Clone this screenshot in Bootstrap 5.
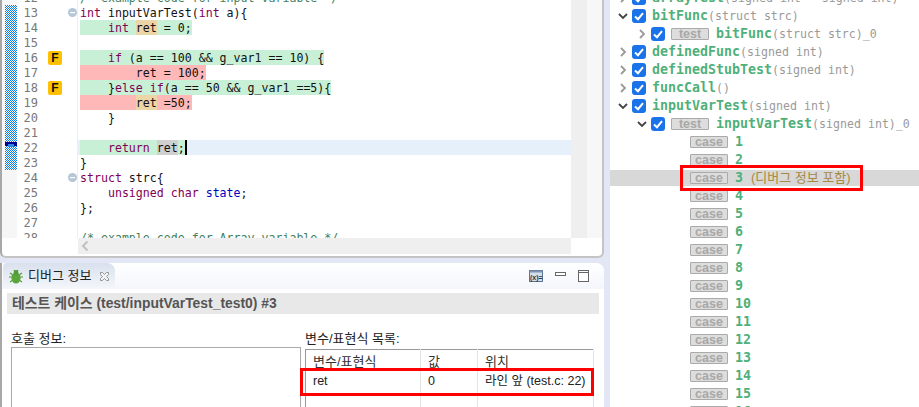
<!DOCTYPE html>
<html lang="ko">
<head>
<meta charset="utf-8">
<title>디버그 정보</title>
<link href="https://cdn.jsdelivr.net/npm/bootstrap@5.3.0/dist/css/bootstrap.min.css" rel="stylesheet">
<style>
html,body{margin:0;height:407px;overflow:hidden;background:#fff}
.shell{width:919px;height:407px;overflow:hidden;position:relative;font-family:"Liberation Sans","Noto Sans CJK KR",sans-serif;font-size:12px;color:#222}
.leftcol{width:610px;height:407px;flex:none;background:#e3e6f5}
.editorbox{height:258px;width:604px;background:#fff;border-left:2px solid #a8a8a8;border-bottom:2px solid #c4c4c4;border-right:2px solid #c4c4c4;border-bottom-left-radius:6px;border-bottom-right-radius:6px;overflow:hidden}
.mainrow{height:238px}
.rulercol{width:15px;flex:none;background:#f6f6f6;padding-left:3px;padding-top:5px;position:relative}
.rulerfill{display:block;width:12px;height:165px}
.rulermark{position:absolute;left:3px;top:142px;width:12px;height:4px;background:#000090}
.rulermark::after{content:"";position:absolute;left:3px;top:2px;width:6px;height:3px;background:#2a88e0}
.clip{flex:1;overflow:hidden;min-width:0;position:relative}
.codelist{margin-top:-10px;font-family:"DejaVu Sans Mono","Liberation Mono",monospace;font-size:11.6px;color:#111}
.ln{height:15px;line-height:17px;white-space:pre}
.num{width:21px;flex:none;text-align:right;color:#787878;font-size:12px}
.anno{width:28px;flex:none;padding-left:10px;padding-top:1px}
.fbadge{display:block;width:14px;height:14px;border-radius:2px;background:#ffc000;color:#111;font:bold 12px/14px "Liberation Sans",sans-serif;text-align:center}
.foldc{width:12px;flex:none;border-right:1px solid #eee;padding-left:2px;padding-top:3px;line-height:0}
.codec{flex:1;padding-left:2px}
.curline{background:#e6f0fb}
.g,.r,.o,.s{display:inline-block;height:15px;vertical-align:top}
.g{background:#c8f0d6}.r{background:#ffb8b8}.o{background:#ecd5a6}.s{background:#d0d0d0}
.kw{color:#7f0055;font-weight:500}
.fld{color:#0000c0}
.cmt{color:#3f7f5f}
.caret{display:inline-block;width:2px;height:15px;background:#000;vertical-align:top}
.vsb{width:16px;flex:none;background:#efefef}
.ovr{width:15px;flex:none;background:#f7f7f7}
.hsb{height:16px;margin-left:76px;margin-right:31px;background:#efefef;padding-left:3px}
.btmpanel{margin-top:5px;width:604px;height:144px;background:#fff;border-left:2px solid #a8a8a8;border-top-right-radius:8px;overflow:hidden}
.tabstrip{height:26px;background:linear-gradient(#fff,#f3f6fb);border-top-right-radius:8px}
.dtab{width:112px;margin-left:1px;height:26px;background:linear-gradient(#d9e1ee,#f4f7fb);border-top-right-radius:8px;border-top-left-radius:4px;padding-left:5px;gap:4px;font-size:13px;color:#222}
.viewbtns{margin-left:auto;padding-right:15px;gap:12px}
.ptitle{margin:4px 5px 0 5px;height:21px;line-height:21px;background:#e8e8e8;color:#555;font-weight:700;font-size:13.9px;padding-left:5px;white-space:nowrap}
.cols{padding:15px 0 0 9px;gap:4px}
.colhead{height:20px;line-height:20px;font-size:13px}
.colA{width:290px;flex:none}
.colB{width:289px;flex:none}
.listbox{height:70px;border:1px solid #aaa;border-bottom:0;margin-top:-2px}
.vartable{width:289px;table-layout:fixed;border-collapse:collapse;margin:0;border:1px solid #999;border-bottom:0;font-size:12.5px}
.vartable th{font-weight:400;height:22px;padding:0 0 0 7px;border:0;border-right:1px solid #e4e4e4;color:#333;background:#fff;font-size:13px}
.vartable td{height:25px;padding:0 0 0 7px;border:0;border-right:1px solid #e4e4e4;background:#fff;color:#222;white-space:nowrap}
.rightcol{flex:1;min-width:0;overflow:hidden}
.tree{margin-top:-11px;font-family:"DejaVu Sans Mono","Liberation Mono",monospace}
.trow{height:18px;line-height:18px;white-space:pre}
.trow.sel{background:#d8d8d8;box-shadow:inset 0 1px #fff,inset 0 -1px #fff}
.lv1{padding-left:7px}.lv2{padding-left:26px}.lv3{padding-left:80px}
.chev{width:12px;height:12px;flex:none;margin-right:3px}
.cbx{width:14px;height:14px;flex:none;margin-right:6px;border-radius:3px;background:#1a73e8}
.nm{font-weight:700;font-size:13.3px;color:#4fb07a}
.args{font-size:11.6px;color:#9a9a9a}
.tag{display:inline-block;width:38px;height:12px;border:1px solid #aaa;border-radius:1px;background:#ddd;color:#a8a8a8;font:700 12.5px/10px "Liberation Sans",sans-serif;text-align:center;margin-right:7px;flex:none}
.dbg{font-family:"Liberation Sans","Noto Sans CJK KR",sans-serif;font-size:13px;color:#a8893f}
.redbox{position:absolute;border:3px solid #f00;pointer-events:none}
.rb1{left:300px;top:368px;width:294px;height:28px}
.rb2{left:680px;top:165px;width:183px;height:26px}
</style>
</head>
<body>
<div class="shell d-flex">
  <div class="leftcol d-flex flex-column">
    <div class="editorbox d-flex flex-column">
      <div class="mainrow d-flex">
        <div class="rulercol"><svg class="rulerfill" viewBox="0 0 12 165" shape-rendering="crispEdges"><defs><pattern id="chk" width="2" height="2" patternUnits="userSpaceOnUse"><rect width="2" height="2" fill="#fff"/><rect width="1" height="1" fill="#0a7fe8"/><rect x="1" y="1" width="1" height="1" fill="#0a7fe8"/></pattern></defs><rect width="12" height="165" fill="url(#chk)"/></svg><div class="rulermark"></div></div>
        <div class="clip">
          <div class="codelist">
            <div class="ln d-flex"><div class="num">12</div><div class="anno"></div><div class="foldc"></div><div class="codec cmt">/* example code for input variable */</div></div>
            <div class="ln d-flex"><div class="num">13</div><div class="anno"></div><div class="foldc"><svg width="9" height="9" viewBox="0 0 9 9"><circle cx="4.5" cy="4.5" r="4.5" fill="#b4c6d8"/><rect x="2" y="4" width="5" height="1.2" fill="#fff"/></svg></div><div class="codec"><span class="kw">int</span> inputVarTest(<span class="kw">int</span> a){</div></div>
            <div class="ln d-flex"><div class="num">14</div><div class="anno"></div><div class="foldc"></div><div class="codec"><span class="g">    <span class="kw">int</span> </span><span class="o">ret</span><span class="g"> = 0;</span></div></div>
            <div class="ln d-flex"><div class="num">15</div><div class="anno"></div><div class="foldc"></div><div class="codec"></div></div>
            <div class="ln d-flex"><div class="num">16</div><div class="anno"><span class="fbadge">F</span></div><div class="foldc"></div><div class="codec"><span class="g">    <span class="kw">if</span> (a == 100 &amp;&amp; g_var1 == 10) {</span></div></div>
            <div class="ln d-flex"><div class="num">17</div><div class="anno"></div><div class="foldc"></div><div class="codec"><span class="r">        ret = 100;</span></div></div>
            <div class="ln d-flex"><div class="num">18</div><div class="anno"><span class="fbadge">F</span></div><div class="foldc"></div><div class="codec"><span class="g">    }<span class="kw">else if</span>(a == 50 &amp;&amp; g_var1 ==5){</span></div></div>
            <div class="ln d-flex"><div class="num">19</div><div class="anno"></div><div class="foldc"></div><div class="codec"><span class="r">        </span><span class="o">ret</span><span class="r"> =50;</span></div></div>
            <div class="ln d-flex"><div class="num">20</div><div class="anno"></div><div class="foldc"></div><div class="codec">    }</div></div>
            <div class="ln d-flex"><div class="num">21</div><div class="anno"></div><div class="foldc"></div><div class="codec"></div></div>
            <div class="ln d-flex"><div class="num">22</div><div class="anno"></div><div class="foldc"></div><div class="codec curline"><span class="g">    <span class="kw">return</span> </span><span class="s">ret</span><span class="g">;</span><span class="caret"></span></div></div>
            <div class="ln d-flex"><div class="num">23</div><div class="anno"></div><div class="foldc"></div><div class="codec">}</div></div>
            <div class="ln d-flex"><div class="num">24</div><div class="anno"></div><div class="foldc"><svg width="9" height="9" viewBox="0 0 9 9"><circle cx="4.5" cy="4.5" r="4.5" fill="#b4c6d8"/><rect x="2" y="4" width="5" height="1.2" fill="#fff"/></svg></div><div class="codec"><span class="kw">struct</span> strc{</div></div>
            <div class="ln d-flex"><div class="num">25</div><div class="anno"></div><div class="foldc"></div><div class="codec">    <span class="kw">unsigned char</span> <span class="fld">state</span>;</div></div>
            <div class="ln d-flex"><div class="num">26</div><div class="anno"></div><div class="foldc"></div><div class="codec">};</div></div>
            <div class="ln d-flex"><div class="num">27</div><div class="anno"></div><div class="foldc"></div><div class="codec"></div></div>
            <div class="ln d-flex"><div class="num">28</div><div class="anno"></div><div class="foldc"></div><div class="codec cmt">/* example code for Array variable */</div></div>
          </div>
        </div>
        <div class="vsb"></div>
        <div class="ovr"></div>
      </div>
      <div class="hsb d-flex align-items-center"><svg width="8" height="12" viewBox="0 0 8 12"><polyline points="6.5,1.5 2,6 6.5,10.5" fill="none" stroke="#c0c0c0" stroke-width="2"/></svg></div>
    </div>
    <div class="btmpanel">
      <div class="tabstrip d-flex">
        <div class="dtab d-flex align-items-center">
          <svg width="16" height="16" viewBox="0 0 16 16"><g stroke="#4f9a3a" stroke-width="1.2"><path d="M2 5l3 2M14 5l-3 2M1 9h3M15 9h-3M2 14l3-2M14 14l-3-2M6 2l1 2M10 2l-1 2"/></g><ellipse cx="8" cy="10" rx="4.6" ry="5.5" fill="#5aa53c"/><circle cx="8" cy="4.5" r="2.4" fill="#4f9a3a"/></svg>
          <span>디버그 정보</span>
          <svg class="ms-1" width="11" height="11" viewBox="0 0 11 11"><path d="M1.5 1.5h2l2 2 2-2h2v2l-2 2 2 2v2h-2l-2-2-2 2h-2v-2l2-2-2-2z" fill="#f4f4f4" stroke="#8a8a8a" stroke-width=".9"/></svg>
        </div>
        <div class="viewbtns d-flex align-items-center">
          <svg width="14" height="12" viewBox="0 0 14 12"><rect x=".5" y=".5" width="13" height="11" fill="#d4dfee" stroke="#5c7391"/><rect x=".5" y=".5" width="13" height="2" fill="#7d93ad"/><text x="1" y="9.5" font-size="7" font-family="Liberation Sans" font-weight="700" fill="#334">(x)=</text></svg>
          <svg class="mb-1" width="11" height="5" viewBox="0 0 11 5"><rect x=".5" y=".5" width="10" height="3" fill="#fff" stroke="#666"/></svg>
          <svg width="11" height="12" viewBox="0 0 11 12"><rect x=".5" y=".5" width="10" height="11" fill="#fff" stroke="#666"/><rect x=".5" y=".5" width="10" height="2" fill="#fff" stroke="#666"/></svg>
        </div>
      </div>
      <div class="ptitle">테스트 케이스 (test/inputVarTest_test0) #3</div>
      <div class="cols d-flex">
        <div class="colA">
          <div class="colhead">호출 정보:</div>
          <div class="listbox"></div>
        </div>
        <div class="colB">
          <div class="colhead">변수/표현식 목록:</div>
          <table class="table vartable">
            <colgroup><col style="width:115px"><col style="width:57px"><col></colgroup>
            <thead><tr><th>변수/표현식</th><th>값</th><th>위치</th></tr></thead>
            <tbody><tr><td>ret</td><td>0</td><td>라인 앞 (test.c: 22)</td></tr><tr><td></td><td></td><td></td></tr></tbody>
          </table>
        </div>
      </div>
    </div>
  </div>
  <div class="rightcol">
    <div class="tree">
      <div class="trow lv1 d-flex align-items-center"><svg class="chev" viewBox="0 0 12 12"><polyline points="4,2 8,6 4,10" fill="none" stroke="#999" stroke-width="1.8"/></svg><svg class="cbx" viewBox="0 0 14 14"><polyline points="3,7.5 6,10.2 11,4.2" fill="none" stroke="#fff" stroke-width="2"/></svg><span class="nm">arrayTest</span><span class="args">(signed int * signed int)</span></div>
      <div class="trow lv1 d-flex align-items-center"><svg class="chev" viewBox="0 0 12 12"><polyline points="2,4 6,8 10,4" fill="none" stroke="#444" stroke-width="1.8"/></svg><svg class="cbx" viewBox="0 0 14 14"><polyline points="3,7.5 6,10.2 11,4.2" fill="none" stroke="#fff" stroke-width="2"/></svg><span class="nm">bitFunc</span><span class="args">(struct strc)</span></div>
      <div class="trow lv2 d-flex align-items-center"><svg class="chev" viewBox="0 0 12 12"><polyline points="4,2 8,6 4,10" fill="none" stroke="#999" stroke-width="1.8"/></svg><svg class="cbx" viewBox="0 0 14 14"><polyline points="3,7.5 6,10.2 11,4.2" fill="none" stroke="#fff" stroke-width="2"/></svg><span class="tag">test</span><span class="nm">bitFunc</span><span class="args">(struct strc)_0</span></div>
      <div class="trow lv1 d-flex align-items-center"><svg class="chev" viewBox="0 0 12 12"><polyline points="4,2 8,6 4,10" fill="none" stroke="#999" stroke-width="1.8"/></svg><svg class="cbx" viewBox="0 0 14 14"><polyline points="3,7.5 6,10.2 11,4.2" fill="none" stroke="#fff" stroke-width="2"/></svg><span class="nm">definedFunc</span><span class="args">(signed int)</span></div>
      <div class="trow lv1 d-flex align-items-center"><svg class="chev" viewBox="0 0 12 12"><polyline points="4,2 8,6 4,10" fill="none" stroke="#999" stroke-width="1.8"/></svg><svg class="cbx" viewBox="0 0 14 14"><polyline points="3,7.5 6,10.2 11,4.2" fill="none" stroke="#fff" stroke-width="2"/></svg><span class="nm">definedStubTest</span><span class="args">(signed int)</span></div>
      <div class="trow lv1 d-flex align-items-center"><svg class="chev" viewBox="0 0 12 12"><polyline points="4,2 8,6 4,10" fill="none" stroke="#999" stroke-width="1.8"/></svg><svg class="cbx" viewBox="0 0 14 14"><polyline points="3,7.5 6,10.2 11,4.2" fill="none" stroke="#fff" stroke-width="2"/></svg><span class="nm">funcCall</span><span class="args">()</span></div>
      <div class="trow lv1 d-flex align-items-center"><svg class="chev" viewBox="0 0 12 12"><polyline points="2,4 6,8 10,4" fill="none" stroke="#444" stroke-width="1.8"/></svg><svg class="cbx" viewBox="0 0 14 14"><polyline points="3,7.5 6,10.2 11,4.2" fill="none" stroke="#fff" stroke-width="2"/></svg><span class="nm">inputVarTest</span><span class="args">(signed int)</span></div>
      <div class="trow lv2 d-flex align-items-center"><svg class="chev" viewBox="0 0 12 12"><polyline points="2,4 6,8 10,4" fill="none" stroke="#444" stroke-width="1.8"/></svg><svg class="cbx" viewBox="0 0 14 14"><polyline points="3,7.5 6,10.2 11,4.2" fill="none" stroke="#fff" stroke-width="2"/></svg><span class="tag">test</span><span class="nm">inputVarTest</span><span class="args">(signed int)_0</span></div>
      <div class="trow lv3 d-flex align-items-center"><span class="tag">case</span><span class="nm">1</span></div>
      <div class="trow lv3 d-flex align-items-center"><span class="tag">case</span><span class="nm">2</span></div>
      <div class="trow lv3 sel d-flex align-items-center"><span class="tag">case</span><span class="nm">3</span><span class="dbg ms-2">(디버그 정보 포함)</span></div>
      <div class="trow lv3 d-flex align-items-center"><span class="tag">case</span><span class="nm">4</span></div>
      <div class="trow lv3 d-flex align-items-center"><span class="tag">case</span><span class="nm">5</span></div>
      <div class="trow lv3 d-flex align-items-center"><span class="tag">case</span><span class="nm">6</span></div>
      <div class="trow lv3 d-flex align-items-center"><span class="tag">case</span><span class="nm">7</span></div>
      <div class="trow lv3 d-flex align-items-center"><span class="tag">case</span><span class="nm">8</span></div>
      <div class="trow lv3 d-flex align-items-center"><span class="tag">case</span><span class="nm">9</span></div>
      <div class="trow lv3 d-flex align-items-center"><span class="tag">case</span><span class="nm">10</span></div>
      <div class="trow lv3 d-flex align-items-center"><span class="tag">case</span><span class="nm">11</span></div>
      <div class="trow lv3 d-flex align-items-center"><span class="tag">case</span><span class="nm">12</span></div>
      <div class="trow lv3 d-flex align-items-center"><span class="tag">case</span><span class="nm">13</span></div>
      <div class="trow lv3 d-flex align-items-center"><span class="tag">case</span><span class="nm">14</span></div>
      <div class="trow lv3 d-flex align-items-center"><span class="tag">case</span><span class="nm">15</span></div>
      <div class="trow lv3 d-flex align-items-center"><span class="tag">case</span><span class="nm">16</span></div>
    </div>
  </div>
  <div class="redbox rb1"></div>
  <div class="redbox rb2"></div>
</div>
<script src="https://cdn.jsdelivr.net/npm/bootstrap@5.3.0/dist/js/bootstrap.bundle.min.js"></script>
</body>
</html>
